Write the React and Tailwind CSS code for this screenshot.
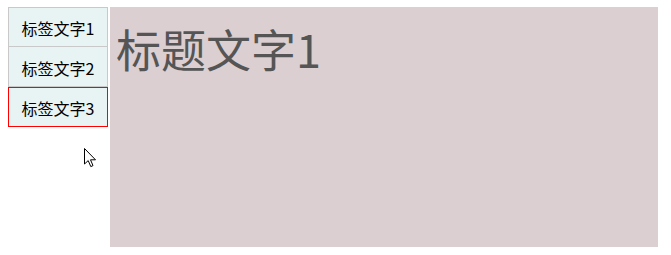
import React, { useState } from "react";

const tabs = ["标签文字1", "标签文字2", "标签文字3"];

const Cursor = () => (
  <svg
    className="absolute left-[84px] top-[148px]"
    width="13"
    height="20"
    viewBox="0 0 13 20"
  >
    <path
      d="M0.5 0.5 L0.5 16 L4.2 12.6 L6.8 18.6 L9 17.6 L6.5 11.8 L11.5 11.8 Z"
      fill="#fff"
      stroke="#000"
      strokeWidth="1"
      strokeLinejoin="miter"
    />
  </svg>
);

export default function App() {
  const [active, setActive] = useState(2);

  return (
    <div
      className="relative w-[671px] h-[255px] bg-white"
      style={{ fontFamily: '"Noto Sans CJK SC", "Noto Sans", sans-serif' }}
    >
      <div className="flex gap-[2px] pl-[8px] pt-[7px]">
        {/* Tabs */}
        <div className="flex flex-col w-[100px]">
          {tabs.map((t, i) => (
            <div
              key={t}
              onClick={() => setActive(i)}
              className={`h-[40px] flex items-center justify-center pt-[2px] bg-[#e8f3f3] text-[16px] text-[#000] cursor-pointer border ${
                i === active
                  ? "border-[#ff0000]"
                  : i === 0
                  ? "border-[#c9c9c9]"
                  : "border-[#c9c9c9] border-t-0"
              }`}
            >
              {t}
            </div>
          ))}
        </div>

        {/* Panel */}
        <div className="w-[548px] h-[240px] bg-[#dbcfd2] pl-[6px] pt-[13px]">
          <h1 className="text-[45px] leading-[1.3] text-[#555] font-normal">
            标题文字1
          </h1>
        </div>
      </div>
      <Cursor />
    </div>
  );
}
